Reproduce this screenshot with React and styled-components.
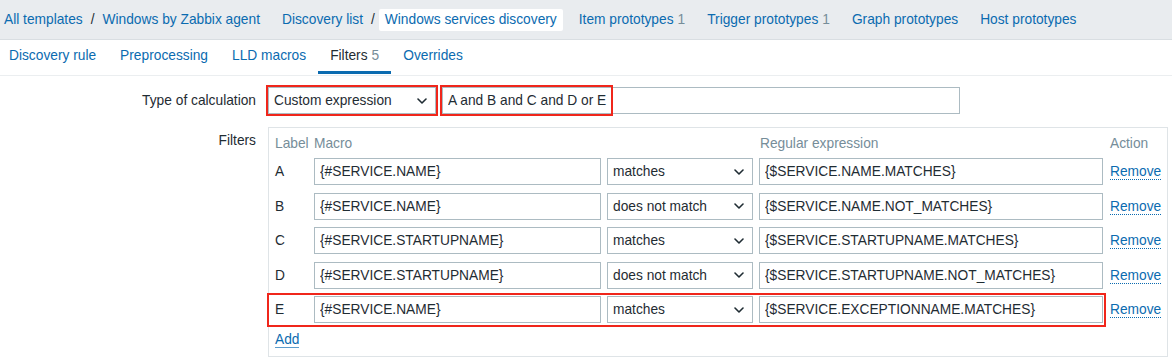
import React from 'react';
import styled, { createGlobalStyle } from 'styled-components';

const LINK = '#0b6bb0';
const TEXT = '#1f2c33';
const MUTED = '#768d99';
const BORDER = '#acbbc2';
const RED = '#f0261b';

const GlobalStyle = createGlobalStyle`
  html, body { margin: 0; padding: 0; background: #fff; }
  body {
    font-family: "Liberation Sans", Arial, Helvetica, sans-serif;
    font-size: 13.75px;
    color: ${TEXT};
  }
  * { box-sizing: border-box; }
`;

const Page = styled.div`
  width: 1172px;
  height: 364px;
  overflow: hidden;
  background: #fff;
`;

/* ---------- top navigation ---------- */
const TopBar = styled.nav`
  display: flex;
  align-items: center;
  gap: 10px;
  height: 40px;
  padding-left: 4px;
  background: #e9ecef;
  border-bottom: 1px solid #d9dee2;
`;

const Crumbs = styled.div`
  display: flex;
  align-items: center;
  padding: 0 ${(p) => (p.$endsWithCurrent ? 0 : 6)}px 0 ${(p) => (p.$first ? 0 : 6)}px;
`;

const CrumbLink = styled.a`
  color: ${LINK};
  text-decoration: none;
  white-space: nowrap;
`;

const Sep = styled.span`
  margin: 0 ${(p) => (p.$tight ? 4 : 8)}px 0 8px;
  color: ${TEXT};
`;

const CurrentCrumb = styled.span`
  display: flex;
  align-items: center;
  height: 22px;
  padding: 0 6px;
  background: #fff;
  border-radius: 2px;
  color: ${LINK};
  white-space: nowrap;
`;

const NavLink = styled.a`
  padding: 0 6px;
  color: ${LINK};
  text-decoration: none;
  white-space: nowrap;
`;

const Count = styled.span`
  margin-left: 4px;
  color: ${MUTED};
`;

/* ---------- tabs ---------- */
const TabBar = styled.div`
  display: flex;
  align-items: flex-start;
  height: 36px;
  padding-left: 9px;
  border-bottom: 1px solid #ebeef0;
`;

const Tab = styled.a`
  display: flex;
  align-items: center;
  height: 34px;
  padding: 0 12px;
  border-bottom: 3px solid ${(p) => (p.$active ? LINK : 'transparent')};
  color: ${(p) => (p.$active ? TEXT : LINK)};
  text-decoration: none;
  white-space: nowrap;
  &:first-child { padding-left: 0; }
`;

/* ---------- form ---------- */
const Form = styled.div`
  display: grid;
  grid-template-columns: 256px 1fr;
  column-gap: 12px;
  row-gap: 13px;
  padding-top: 11px;
`;

const FieldLabel = styled.div`
  text-align: right;
  line-height: 27px;
  white-space: nowrap;
`;

const Controls = styled.div`
  display: flex;
  gap: 6px;
`;

const Annotated = styled.div`
  position: relative;
  display: flex;
`;

const RedMark = styled.span`
  position: absolute;
  top: ${(p) => p.$top ?? -2}px;
  left: ${(p) => p.$left ?? -2}px;
  width: ${(p) => p.$w}px;
  height: ${(p) => p.$h}px;
  border: 2px solid ${RED};
  pointer-events: none;
`;

const SelectBox = styled.div`
  display: flex;
  align-items: center;
  justify-content: space-between;
  width: ${(p) => p.$w}px;
  height: 27px;
  padding: 0 8px 0 5px;
  background: #fff;
  border: 1px solid ${BORDER};
  color: ${TEXT};
  white-space: nowrap;
`;

const TextInput = styled.input`
  width: ${(p) => p.$w}px;
  height: 27px;
  padding: 0 5px;
  margin: 0;
  background: #fff;
  border: 1px solid ${BORDER};
  border-radius: 0;
  font: inherit;
  color: ${TEXT};
  outline: none;
`;

const FilterBox = styled.div`
  width: 900px;
  height: 230px;
  padding: 4px 6px 0 6px;
  border: 1px solid #dfe4e7;
`;

const GRID = '33px 287px 146px 344px auto';

const HeaderRow = styled.div`
  display: grid;
  grid-template-columns: ${GRID};
  column-gap: 6px;
  align-items: center;
  height: 22px;
  color: ${MUTED};
  white-space: nowrap;
`;

const HeaderCell = styled.span`
  padding-left: ${(p) => p.$pad || 0}px;
`;

const Rows = styled.div`
  display: flex;
  flex-direction: column;
  gap: 7.5px;
  margin-top: 4px;
`;

const FilterRow = styled.div`
  position: relative;
  display: grid;
  grid-template-columns: ${GRID};
  column-gap: 6px;
  align-items: center;
`;

const RowLabel = styled.span`
  color: ${TEXT};
`;

const RemoveLink = styled.a`
  justify-self: start;
  margin-left: 1px;
  margin-top: 1px;
  color: ${LINK};
  text-decoration: none;
  line-height: 15px;
  border-bottom: 1px dotted ${LINK};
`;

const AddLink = styled.a`
  align-self: flex-start;
  margin-top: 9px;
  color: ${LINK};
  text-decoration: none;
  line-height: 15px;
  border-bottom: 1px solid #5c9ccc;
`;

const Footer = styled.div`
  display: flex;
`;

const Chevron = () => (
  <svg width="10" height="6" viewBox="0 0 10 6" fill="none">
    <path d="M1 1L5 5L9 1" stroke={TEXT} strokeWidth="1.6" strokeLinecap="round" strokeLinejoin="round" />
  </svg>
);

const filters = [
  { label: 'A', macro: '{#SERVICE.NAME}', op: 'matches', value: '{$SERVICE.NAME.MATCHES}' },
  { label: 'B', macro: '{#SERVICE.NAME}', op: 'does not match', value: '{$SERVICE.NAME.NOT_MATCHES}' },
  { label: 'C', macro: '{#SERVICE.STARTUPNAME}', op: 'matches', value: '{$SERVICE.STARTUPNAME.MATCHES}' },
  { label: 'D', macro: '{#SERVICE.STARTUPNAME}', op: 'does not match', value: '{$SERVICE.STARTUPNAME.NOT_MATCHES}' },
  { label: 'E', macro: '{#SERVICE.NAME}', op: 'matches', value: '{$SERVICE.EXCEPTIONNAME.MATCHES}', marked: true },
];

export default function App() {
  return (
    <Page>
      <GlobalStyle />
      <TopBar>
        <Crumbs $first>
          <CrumbLink>All templates</CrumbLink>
          <Sep>/</Sep>
          <CrumbLink>Windows by Zabbix agent</CrumbLink>
        </Crumbs>
        <Crumbs $endsWithCurrent>
          <CrumbLink>Discovery list</CrumbLink>
          <Sep $tight>/</Sep>
          <CurrentCrumb>Windows services discovery</CurrentCrumb>
        </Crumbs>
        <NavLink>Item prototypes<Count>1</Count></NavLink>
        <NavLink>Trigger prototypes<Count>1</Count></NavLink>
        <NavLink>Graph prototypes</NavLink>
        <NavLink>Host prototypes</NavLink>
      </TopBar>

      <TabBar>
        <Tab>Discovery rule</Tab>
        <Tab>Preprocessing</Tab>
        <Tab>LLD macros</Tab>
        <Tab $active>Filters<Count>5</Count></Tab>
        <Tab>Overrides</Tab>
      </TabBar>

      <Form>
        <FieldLabel>Type of calculation</FieldLabel>
        <Controls>
          <Annotated>
            <SelectBox $w={168}>
              <span>Custom expression</span>
              <Chevron />
            </SelectBox>
            <RedMark $w={172} $h={31} />
          </Annotated>
          <Annotated>
            <TextInput $w={518} readOnly value="A and B and C and D or E" />
            <RedMark $w={173} $h={31} />
          </Annotated>
        </Controls>

        <FieldLabel>Filters</FieldLabel>
        <FilterBox>
          <HeaderRow>
            <HeaderCell>Label</HeaderCell>
            <HeaderCell>Macro</HeaderCell>
            <HeaderCell />
            <HeaderCell $pad={1}>Regular expression</HeaderCell>
            <HeaderCell $pad={1}>Action</HeaderCell>
          </HeaderRow>
          <Rows>
            {filters.map((f) => (
              <FilterRow key={f.label}>
                <RowLabel>{f.label}</RowLabel>
                <TextInput $w={287} readOnly value={f.macro} />
                <SelectBox $w={146}>
                  <span>{f.op}</span>
                  <Chevron />
                </SelectBox>
                <TextInput $w={344} readOnly value={f.value} />
                <RemoveLink>Remove</RemoveLink>
                {f.marked && <RedMark $left={-8} $top={-3} $w={839} $h={34} />}
              </FilterRow>
            ))}
          </Rows>
          <Footer>
            <AddLink>Add</AddLink>
          </Footer>
        </FilterBox>
      </Form>
    </Page>
  );
}
